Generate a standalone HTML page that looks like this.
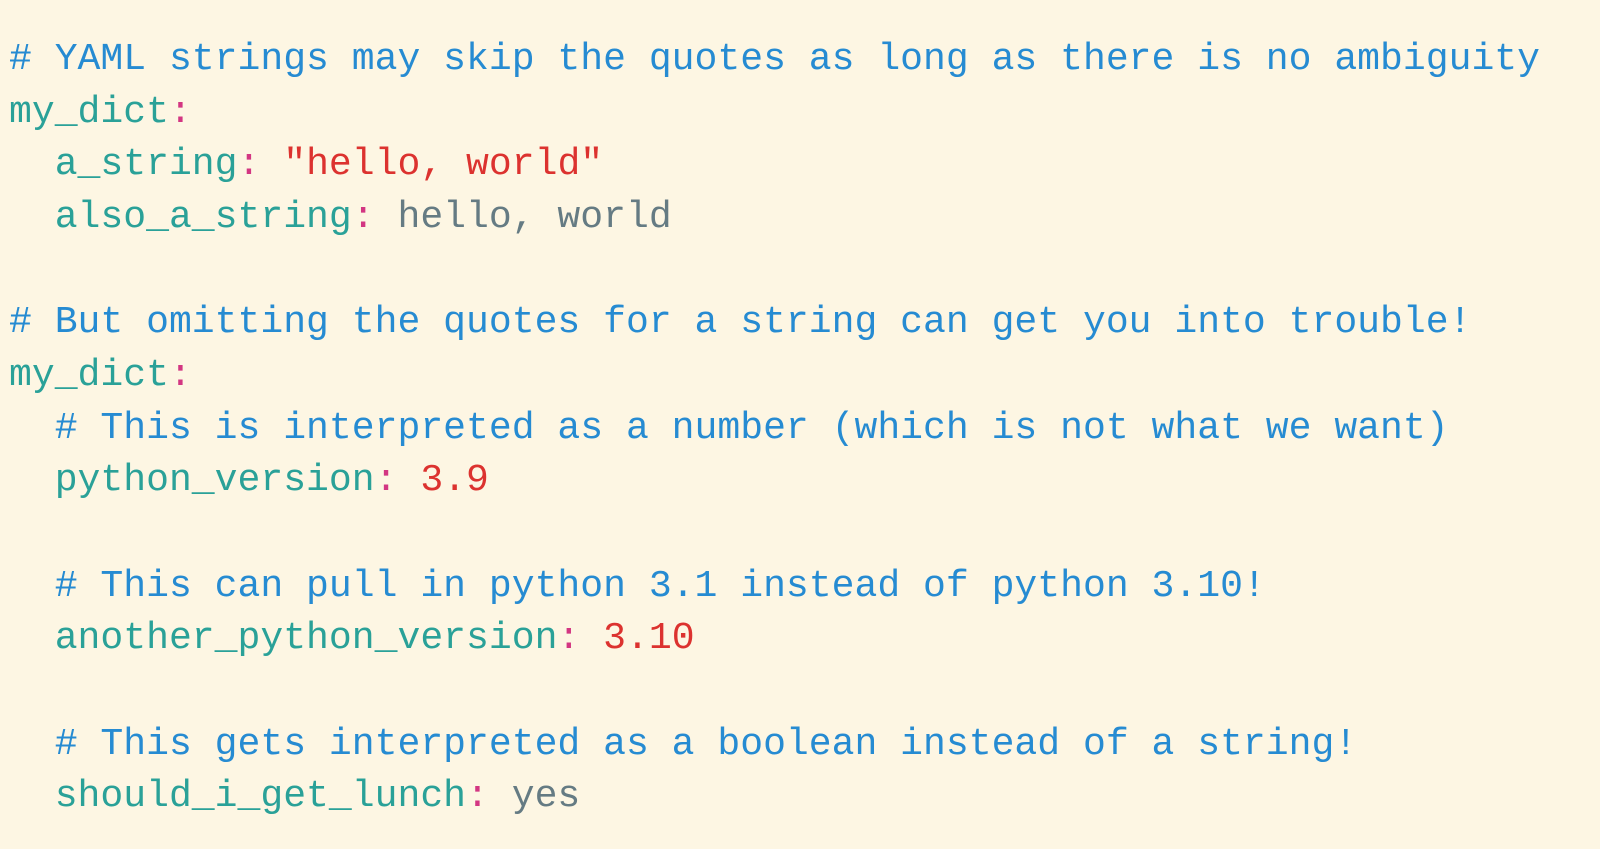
<!DOCTYPE html>
<html><head><meta charset="utf-8"><style>
html,body{margin:0;padding:0;background:#fdf6e3;width:1600px;height:849px;overflow:hidden}
pre{margin:0;position:absolute;left:9px;top:34px;font-family:"Liberation Mono",monospace;font-size:38.1px;line-height:52.65px;color:#657b83;letter-spacing:0}
.c{color:#268bd2}.k{color:#2aa198}.p{color:#d33682}.s{color:#dc322f}
</style></head><body>
<pre><span class="c"># YAML strings may skip the quotes as long as there is no ambiguity</span>
<span class="k">my_dict</span><span class="p">:</span>
  <span class="k">a_string</span><span class="p">:</span> <span class="s">"hello, world"</span>
  <span class="k">also_a_string</span><span class="p">:</span> hello, world

<span class="c"># But omitting the quotes for a string can get you into trouble!</span>
<span class="k">my_dict</span><span class="p">:</span>
  <span class="c"># This is interpreted as a number (which is not what we want)</span>
  <span class="k">python_version</span><span class="p">:</span> <span class="s">3.9</span>

  <span class="c"># This can pull in python 3.1 instead of python 3.10!</span>
  <span class="k">another_python_version</span><span class="p">:</span> <span class="s">3.10</span>

  <span class="c"># This gets interpreted as a boolean instead of a string!</span>
  <span class="k">should_i_get_lunch</span><span class="p">:</span> yes</pre>
</body></html>
